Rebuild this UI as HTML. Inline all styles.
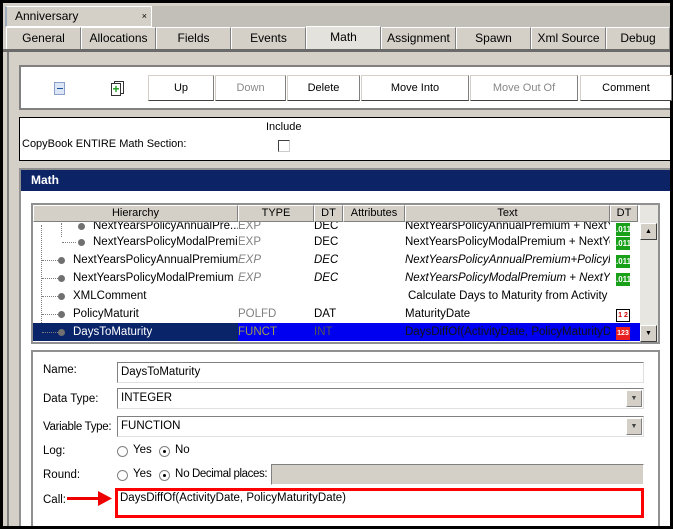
<!DOCTYPE html>
<html><head><meta charset="utf-8"><style>
*{margin:0;padding:0;box-sizing:border-box}
body{width:673px;height:529px;background:#000;position:relative;overflow:hidden;font-family:"Liberation Sans","DejaVu Sans",sans-serif;font-size:11px;color:#000}
.a{position:absolute}
.tab{position:absolute;top:27px;height:22px;background:#d4d0c8;border:1px solid #fff;border-right-color:#808080;border-bottom:none;text-align:center;line-height:21px;font-size:12px}
.btn{position:absolute;top:75px;height:26px;background:#fff;border:1px solid #d4d0c8;border-right-color:#808080;border-bottom-color:#404040;text-align:center;line-height:24px;font-size:11px}
.hd{position:absolute;top:0;height:17px;background:#d4d0c8;border:1px solid #fff;border-right-color:#808080;border-bottom-color:#808080;text-align:center;line-height:15px;font-size:11px;z-index:3}
.row{position:absolute;left:0;height:18px;line-height:18px;font-size:11.5px;white-space:nowrap}
.c{position:absolute;top:0;overflow:hidden;white-space:nowrap}
.g{position:absolute;left:583px;width:14px;height:13px;background:#18a018;color:#fff;font-size:8px;line-height:13px;text-align:center;font-weight:bold}
.dot{position:absolute;width:7px;height:7px;border-radius:50%;background:#707070;top:6px}
.dl{position:absolute;top:9px;border-top:1px dotted #808080;height:0}
.inp{position:absolute;left:117px;width:527px;height:21px;border:1px solid #808080;border-right-color:#e0e0e0;border-bottom-color:#e0e0e0;background:#fff;line-height:19px;padding-left:3px;font-size:11.5px}
.dd{position:absolute;right:1px;top:1px;width:16px;height:17px;background:#d4d0c8;border:1px solid #fff;border-right-color:#808080;border-bottom-color:#808080;font-size:7px;text-align:center;line-height:15px;color:#444}
.lbl{position:absolute;left:43px;font-size:11.5px}
.rad{position:absolute;width:11px;height:11px;border-radius:50%;border:1px solid #808080;background:#fff}
.rad.on::after{content:"";position:absolute;left:3px;top:3px;width:3px;height:3px;border-radius:50%;background:#000}
.t12{font-size:11.5px}
</style></head><body>
<div class="a" style="left:3px;top:3px;width:667px;height:523px;background:#d4d0c8"></div>
<div class="a" style="left:152px;top:6px;width:518px;height:21px;background:#c2bfb8"></div>
<div class="a" style="left:5px;top:6px;width:147px;height:21px;background:#d4d0c8;border:1px solid #fff;border-left:2px solid #9ab;font-size:12px;line-height:18px;padding-left:8px">Anniversary<span style="position:absolute;right:4px;top:0;font-size:9px">×</span></div>
<div class="tab" style="left:6px;width:75px">General</div>
<div class="tab" style="left:81px;width:75px">Allocations</div>
<div class="tab" style="left:156px;width:75px">Fields</div>
<div class="tab" style="left:231px;width:75px">Events</div>
<div class="tab" style="left:306px;width:75px;background:#e4e2dc;top:26px;height:24px">Math</div>
<div class="tab" style="left:381px;width:75px">Assignment</div>
<div class="tab" style="left:456px;width:75px">Spawn</div>
<div class="tab" style="left:531px;width:75px">Xml Source</div>
<div class="tab" style="left:606px;width:64px">Debug</div>
<div class="a" style="left:3px;top:49px;width:667px;height:3px;background:#6a6a6a"></div>
<div class="a" style="left:7px;top:52px;width:2px;height:474px;background:#808080"></div>
<div class="a" style="left:19px;top:65px;width:651px;height:45px;background:#fff;border:2px solid #808080;border-right:none"></div>
<div class="a" style="left:54px;top:82px;width:11px;height:13px;border:1px solid #8aa0c8;background:#dde6f4"></div>
<div class="a" style="left:57px;top:88px;width:6px;height:1px;background:#1a50a0"></div>
<div class="a" style="left:114px;top:81px;width:10px;height:13px;border:1px solid #333;background:#fff"></div>
<div class="a" style="left:111px;top:83px;width:10px;height:13px;border:1px solid #333;background:#fff;color:#1a9a1a;font-weight:bold;font-size:12px;line-height:10px;text-align:center">+</div>
<div class="btn" style="left:148px;width:66px">Up</div>
<div class="btn" style="left:215px;width:71px;color:#888">Down</div>
<div class="btn" style="left:287px;width:73px">Delete</div>
<div class="btn" style="left:361px;width:108px">Move Into</div>
<div class="btn" style="left:470px;width:108px;color:#888">Move Out Of</div>
<div class="btn" style="left:580px;width:92px">Comment</div>
<div class="a" style="left:19px;top:117px;width:651px;height:44px;background:#fff;border:1px solid #000;border-right:none"></div>
<div class="a" style="left:266px;top:121px">Include</div>
<div class="a" style="left:22px;top:138px">CopyBook ENTIRE Math Section:</div>
<div class="a" style="left:278px;top:140px;width:12px;height:12px;border:1px solid #404040;border-right-color:#ccc;border-bottom-color:#ccc"></div>
<div class="a" style="left:19px;top:168px;width:651px;height:358px;background:#fff;border-left:2px solid #909090;border-top:2px solid #909090"></div>
<div class="a" style="left:21px;top:170px;width:649px;height:21px;background:#0c2366;color:#fff;font-weight:bold;font-size:12px;line-height:21px;padding-left:10px">Math</div>
<div class="a" style="left:31px;top:203px;width:629px;height:141px;border:2px solid #909090;background:#fff"></div>
<div class="a" style="left:33px;top:205px;width:607px;height:137px;overflow:hidden">
 <div class="hd" style="left:0;width:205px">Hierarchy</div>
 <div class="hd" style="left:205px;width:76px">TYPE</div>
 <div class="hd" style="left:281px;width:29px">DT</div>
 <div class="hd" style="left:310px;width:62px">Attributes</div>
 <div class="hd" style="left:372px;width:205px">Text</div>
 <div class="hd" style="left:577px;width:28px">DT</div>
 <div class="row" style="top:12px;width:607px">
  <div class="dot" style="left:45px"></div><div class="c" style="left:60px;width:145px">NextYearsPolicyAnnualPre...</div>
  <div class="c" style="left:205px;color:#808080">EXP</div><div class="c" style="left:281px">DEC</div>
  <div class="c" style="left:372px;width:205px">NextYearsPolicyAnnualPremium + NextYea</div>
  <div class="g" style="top:6px">.011</div>
 </div>
 <div class="a" style="left:28px;top:18px;height:14px;border-left:1px dotted #808080"></div>
 <div class="row" style="top:28px;width:607px">
  <div class="dl" style="left:29px;width:14px"></div><div class="dot" style="left:45px"></div><div class="c" style="left:60px;width:145px">NextYearsPolicyModalPremium</div>
  <div class="c" style="left:205px;color:#808080">EXP</div><div class="c" style="left:281px">DEC</div>
  <div class="c" style="left:372px;width:205px">NextYearsPolicyModalPremium + NextYear</div>
  <div class="g" style="top:4px">.011</div>
 </div>
 <div class="a" style="left:8px;top:20px;height:108px;border-left:1px dotted #808080"></div>
 <div class="row" style="top:46px;width:607px">
  <div class="dl" style="left:9px;width:16px"></div><div class="dot" style="left:25px"></div><div class="c" style="left:40px;width:165px">NextYearsPolicyAnnualPremium</div>
  <div class="c" style="left:205px;color:#808080;font-style:italic">EXP</div><div class="c" style="left:281px;font-style:italic">DEC</div>
  <div class="c" style="left:372px;width:205px;font-style:italic">NextYearsPolicyAnnualPremium+PolicyFee</div>
  <div class="g" style="top:4px">.011</div>
 </div>
 <div class="row" style="top:64px;width:607px">
  <div class="dl" style="left:9px;width:16px"></div><div class="dot" style="left:25px"></div><div class="c" style="left:40px;width:165px">NextYearsPolicyModalPremium</div>
  <div class="c" style="left:205px;color:#808080;font-style:italic">EXP</div><div class="c" style="left:281px;font-style:italic">DEC</div>
  <div class="c" style="left:372px;width:205px;font-style:italic">NextYearsPolicyModalPremium + NextYear</div>
  <div class="g" style="top:4px">.011</div>
 </div>
 <div class="row" style="top:82px;width:607px">
  <div class="dl" style="left:9px;width:16px"></div><div class="dot" style="left:25px"></div><div class="c" style="left:40px">XMLComment</div>
  <div class="c" style="left:375px;width:202px">Calculate Days to Maturity from Activity D</div>
 </div>
 <div class="row" style="top:100px;width:607px">
  <div class="dl" style="left:9px;width:16px"></div><div class="dot" style="left:25px"></div><div class="c" style="left:40px">PolicyMaturit</div>
  <div class="c" style="left:205px;color:#808080">POLFD</div><div class="c" style="left:281px">DAT</div>
  <div class="c" style="left:372px">MaturityDate</div>
  <div class="a" style="left:583px;top:4px;width:14px;height:13px;border:1px solid #000;background:#fff;font-size:7px;color:#c00;line-height:11px;text-align:center;font-weight:bold">1 2</div>
 </div>
 <div class="row" style="top:118px;width:607px;background:#0000f0">
  <div class="a" style="left:0;top:0;width:205px;height:18px;background:#0a246a"></div>
  <div class="dl" style="left:9px;width:16px"></div><div class="dot" style="left:25px"></div><div class="c" style="left:40px;color:#fff">DaysToMaturity</div>
  <div class="c" style="left:205px;color:#9a9a50">FUNCT</div><div class="c" style="left:281px;color:#555">INT</div>
  <div class="c" style="left:372px;width:205px;color:#111">DaysDiffOf(ActivityDate, PolicyMaturityDat</div>
  <div class="a" style="left:583px;top:4px;width:14px;height:13px;background:#e82020;color:#fff;font-size:7px;line-height:13px;text-align:center;font-weight:bold">123</div>
 </div>
</div>
<div class="a" style="left:640px;top:205px;width:18px;height:137px;background:#e8e6e0"></div>
<div class="a" style="left:640px;top:223px;width:17px;height:17px;background:#d4d0c8;border:1px solid #fff;border-right-color:#404040;border-bottom-color:#404040;font-size:7px;text-align:center;line-height:15px">▲</div>
<div class="a" style="left:640px;top:325px;width:17px;height:17px;background:#d4d0c8;border:1px solid #fff;border-right-color:#404040;border-bottom-color:#404040;font-size:7px;text-align:center;line-height:15px">▼</div>
<div class="a" style="left:31px;top:350px;width:629px;height:176px;border:2px solid #909090;border-bottom:none;background:#fff"></div>
<div class="lbl" style="top:364px">Name:</div>
<div class="inp" style="top:362px">DaysToMaturity</div>
<div class="lbl" style="top:393px">Data Type:</div>
<div class="inp" style="top:388px">INTEGER<div class="dd">▼</div></div>
<div class="lbl" style="top:421px;letter-spacing:-0.3px">Variable Type:</div>
<div class="inp" style="top:416px">FUNCTION<div class="dd">▼</div></div>
<div class="lbl" style="top:445px">Log:</div>
<div class="rad" style="left:117px;top:446px"></div><div class="a t12" style="left:133px;top:444px">Yes</div>
<div class="rad on" style="left:159px;top:446px"></div><div class="a t12" style="left:175px;top:444px">No</div>
<div class="lbl" style="top:469px">Round:</div>
<div class="rad" style="left:117px;top:470px"></div><div class="a t12" style="left:133px;top:468px">Yes</div>
<div class="rad on" style="left:159px;top:470px"></div><div class="a t12" style="left:175px;top:468px">No</div>
<div class="a t12" style="left:192px;top:468px;letter-spacing:-0.4px">Decimal places:</div>
<div class="a" style="left:271px;top:464px;width:373px;height:21px;background:#d4d0c8;border:1px solid #808080;border-right-color:#fff;border-bottom-color:#fff"></div>
<div class="lbl" style="top:494px">Call:</div>
<div class="a" style="left:67px;top:497px;width:36px;height:3px;background:#e00"></div>
<svg class="a" style="left:98px;top:491px" width="14" height="15"><path d="M0 0 L14 7.5 L0 15 Z" fill="#e00"/></svg>
<div class="a" style="left:115px;top:488px;width:529px;height:30px;border:3px solid #f00;background:#fff;padding-left:2px;line-height:14px;font-size:11.5px">DaysDiffOf(ActivityDate, PolicyMaturityDate)</div>
</body></html>
